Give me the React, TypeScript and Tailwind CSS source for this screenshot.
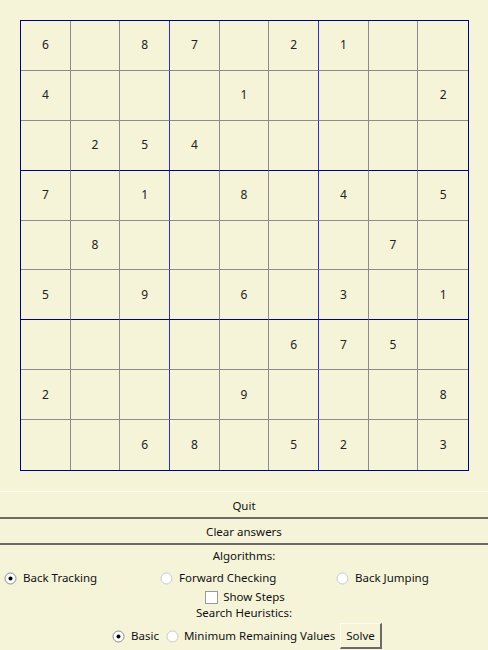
import React from "react";

const board: (number | null)[][] = [
  [6, null, 8, 7, null, 2, 1, null, null],
  [4, null, null, null, 1, null, null, null, 2],
  [null, 2, 5, 4, null, null, null, null, null],
  [7, null, 1, null, 8, null, 4, null, 5],
  [null, 8, null, null, null, null, null, 7, null],
  [5, null, 9, null, 6, null, 3, null, 1],
  [null, null, null, null, null, 6, 7, 5, null],
  [2, null, null, null, 9, null, null, null, 8],
  [null, null, 6, 8, null, 5, 2, null, 3],
];

const Radio = ({ checked }: { checked?: boolean }) => (
  <svg width="13" height="13" viewBox="0 0 13 13" className="shrink-0">
    <circle cx="6.5" cy="6.5" r="5.5" fill="#ffffff" stroke={checked ? "#8a8a8a" : "#c8c8c8"} strokeWidth="1" />
    {checked && <circle cx="6.5" cy="6.5" r="2" fill="#000000" />}
  </svg>
);

const Checkbox = () => (
  <span className="inline-block w-[13px] h-[13px] bg-white border border-[#9a9a9a] shrink-0" />
);

const Cell = ({ value, row, col }: { value: number | null; row: number; col: number }) => {
  const right = col === 8 ? "" : col === 2 || col === 5 ? "border-r border-r-[#3030c0]" : "border-r border-r-[#8c8c8c]";
  const bottom = row === 8 ? "" : row === 2 || row === 5 ? "border-b border-b-[#00008b]" : "border-b border-b-[#8c8c8c]";
  return (
    <div className={`flex items-center justify-center text-[12px] text-[#222] ${right} ${bottom}`}>
      {value ?? ""}
    </div>
  );
};

const App = () => {
  return (
    <div
      className="w-[488px] h-[650px] overflow-hidden flex flex-col text-[11.5px] text-[#111] bg-[#f5f4d9]"
      style={{ fontFamily: '"Noto Sans", "Open Sans", sans-serif' }}
    >
      <div className="shrink-0 ml-[20px] mt-[20px] w-[449px] h-[451px] border border-[#00008b] grid grid-cols-9 grid-rows-9">
        {board.map((r, ri) =>
          r.map((v, ci) => <Cell key={`${ri}-${ci}`} value={v} row={ri} col={ci} />)
        )}
      </div>

      <div className="shrink-0 mt-[20px] flex flex-col">
        <button className="h-[28px] w-full border-t border-t-[#fcfcf0] border-b-2 border-b-[#6a6a6a] flex items-center justify-center pt-[2px]">
          Quit
        </button>
        <button className="h-[26px] w-full border-b-2 border-b-[#6a6a6a] flex items-center justify-center pt-[1px]">
          Clear answers
        </button>
      </div>

      <div className="shrink-0 text-center mt-[2px] leading-[17px]">Algorithms:</div>

      <div className="shrink-0 flex items-center mt-[6px] h-[16px]">
        <div className="flex items-center gap-[6px] ml-[4px] w-[156px]">
          <Radio checked />
          <span>Back Tracking</span>
        </div>
        <div className="flex items-center gap-[6px] w-[176px]">
          <Radio />
          <span>Forward Checking</span>
        </div>
        <div className="flex items-center gap-[6px]">
          <Radio />
          <span>Back Jumping</span>
        </div>
      </div>

      <div className="shrink-0 flex items-center justify-center gap-[5px] mt-[3px] h-[16px] pl-[2px]">
        <Checkbox />
        <span>Show Steps</span>
      </div>

      <div className="shrink-0 text-center leading-[17px] -mt-[1px]">Search Heuristics:</div>

      <div className="shrink-0 flex items-center mt-[2px]">
        <div className="flex items-center gap-[6px] ml-[112px]">
          <Radio checked />
          <span>Basic</span>
        </div>
        <div className="flex items-center gap-[5px] ml-[7px]">
          <Radio />
          <span>Minimum Remaining Values</span>
        </div>
        <button className="ml-[5px] h-[26px] px-[5px] border border-[#fcfcf0] border-r-[#6a6a6a] border-b-[#6a6a6a] border-r-2 border-b-2">
          Solve
        </button>
      </div>
    </div>
  );
};

export default App;
